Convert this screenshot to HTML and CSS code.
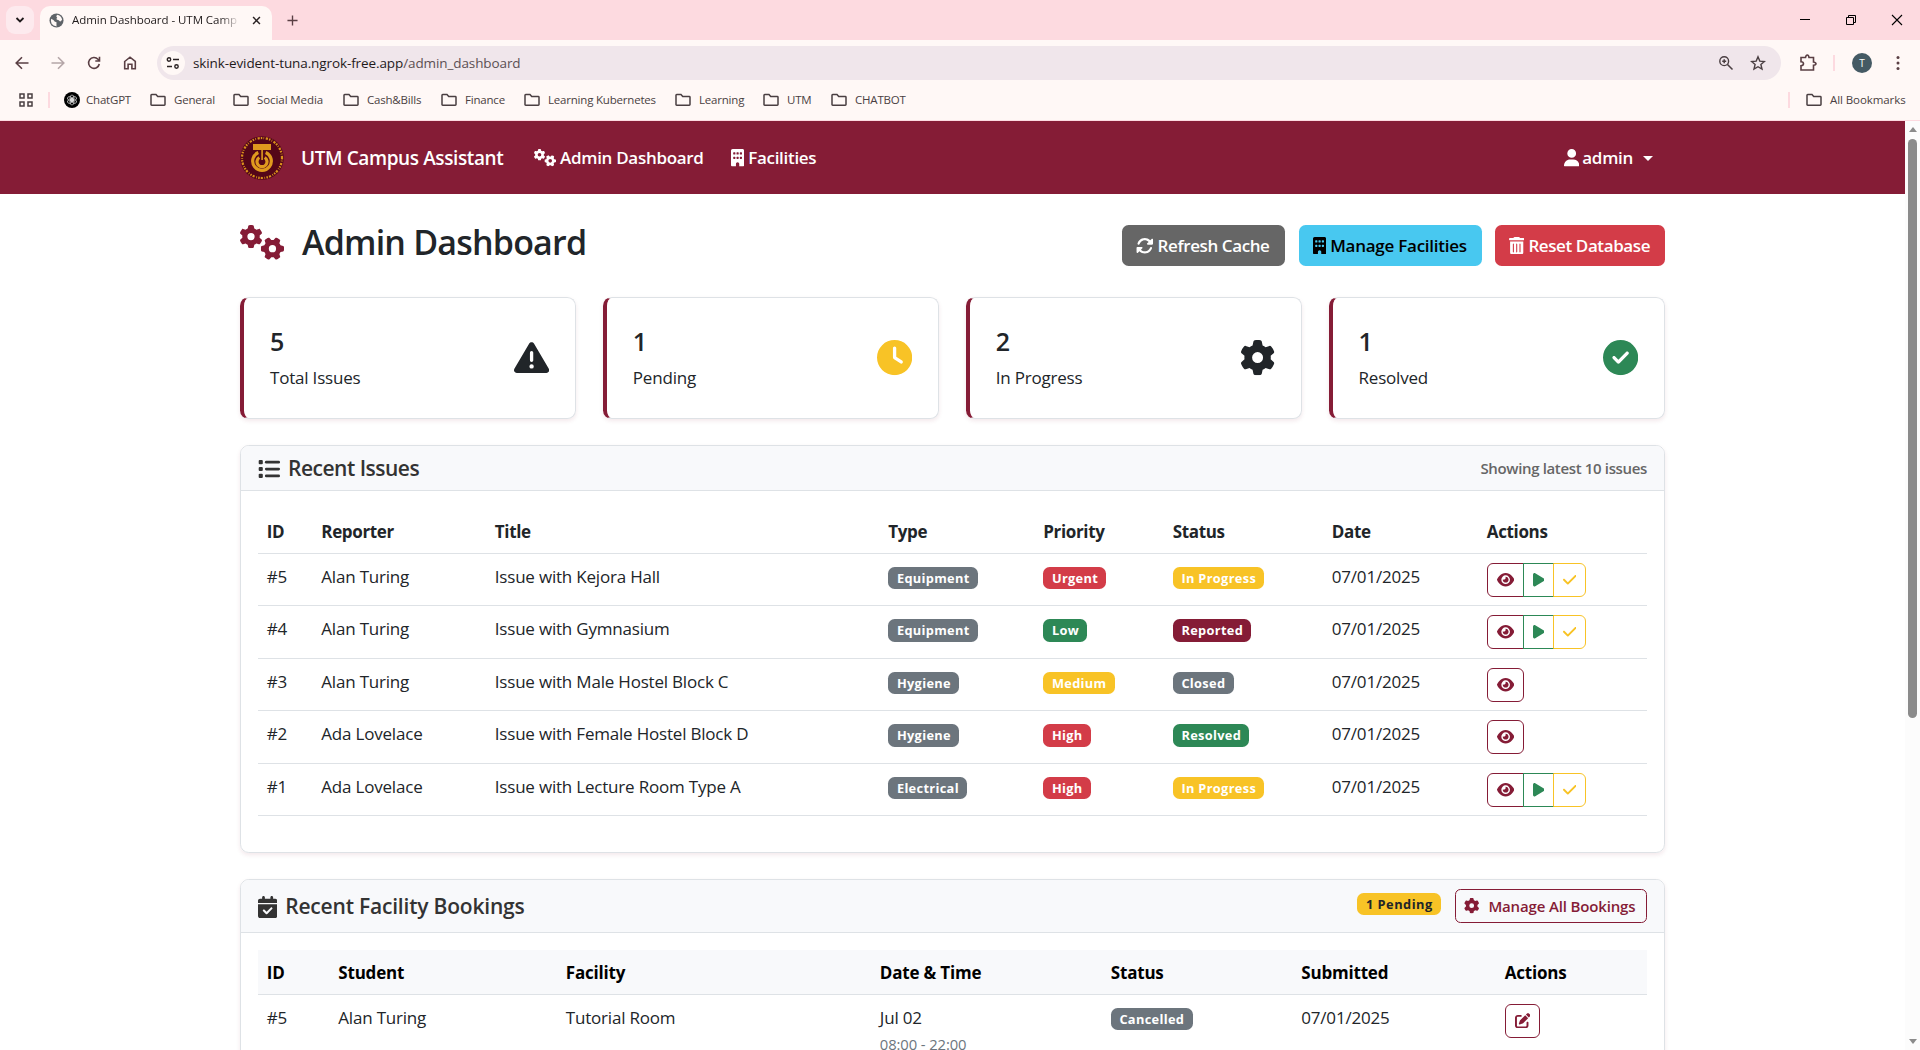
FILE: index.html
```html
<!DOCTYPE html>
<html lang="en">
<head>
<meta charset="utf-8">
<title>Admin Dashboard - UTM Campus Assistant</title>
<link rel="stylesheet" href="styles.css">
</head>
<body>
<svg class="sprite" aria-hidden="true">
  <symbol id="gear" viewBox="0 0 512 512"><path d="M495.9 166.6c3.2 8.7 .5 18.4-6.4 24.6l-43.3 39.4c1.1 8.3 1.7 16.8 1.7 25.4s-.6 17.1-1.7 25.4l43.3 39.4c6.9 6.2 9.6 15.9 6.4 24.6c-4.4 11.9-9.7 23.3-15.8 34.3l-4.7 8.1c-6.6 11-14 21.4-22.1 31.2c-5.9 7.2-15.7 9.6-24.5 6.8l-55.7-17.7c-13.4 10.3-28.2 18.9-44 25.4l-12.5 57.1c-2 9.1-9 16.3-18.2 17.8c-13.8 2.3-28 3.5-42.5 3.5s-28.7-1.2-42.5-3.5c-9.2-1.5-16.2-8.7-18.2-17.8l-12.5-57.1c-15.8-6.5-30.6-15.1-44-25.4L83.1 425.9c-8.8 2.8-18.6 .3-24.5-6.8c-8.1-9.8-15.5-20.2-22.1-31.2l-4.7-8.1c-6.1-11-11.4-22.4-15.8-34.3c-3.2-8.7-.5-18.4 6.4-24.6l43.3-39.4C64.6 273.1 64 264.6 64 256s.6-17.1 1.7-25.4L22.4 191.2c-6.9-6.2-9.6-15.9-6.4-24.6c4.4-11.9 9.7-23.3 15.8-34.3l4.7-8.1c6.6-11 14-21.4 22.1-31.2c5.9-7.2 15.7-9.6 24.5-6.8l55.7 17.7c13.4-10.3 28.2-18.9 44-25.4l12.5-57.1c2-9.1 9-16.3 18.2-17.8C227.3 1.2 241.5 0 256 0s28.7 1.2 42.5 3.5c9.2 1.5 16.2 8.7 18.2 17.8l12.5 57.1c15.8 6.5 30.6 15.1 44 25.4l55.7-17.7c8.8-2.8 18.6-.3 24.5 6.8c8.1 9.8 15.5 20.2 22.1 31.2l4.7 8.1c6.1 11 11.4 22.4 15.8 34.3zM256 336a80 80 0 1 0 0-160 80 80 0 1 0 0 160z"/></symbol>
  <symbol id="gears" viewBox="0 0 640 512"><use href="#gear" width="338" height="338" x="-9" y="0"/><g transform="rotate(90 472 344)"><use href="#gear" width="338" height="338" x="303" y="175"/></g></symbol>
  <symbol id="building" viewBox="0 0 384 512"><path d="M48 0C21.5 0 0 21.5 0 48V464c0 26.5 21.5 48 48 48h96V432c0-26.500 21.500-48 48-48s48 21.500 48 48v80h96c26.500 0 48-21.500 48-48V48c0-26.500-21.500-48-48-48H48zM64 240c0-8.800 7.200-16 16-16h32c8.800 0 16 7.200 16 16v32c0 8.800-7.200 16-16 16H80c-8.800 0-16-7.200-16-16V240zm112-16h32c8.800 0 16 7.200 16 16v32c0 8.800-7.200 16-16 16H176c-8.800 0-16-7.200-16-16V240c0-8.800 7.200-16 16-16zm80 16c0-8.800 7.200-16 16-16h32c8.800 0 16 7.200 16 16v32c0 8.800-7.200 16-16 16H272c-8.800 0-16-7.200-16-16V240zM80 96h32c8.800 0 16 7.200 16 16v32c0 8.800-7.200 16-16 16H80c-8.800 0-16-7.200-16-16V112c0-8.800 7.200-16 16-16zm80 16c0-8.800 7.200-16 16-16h32c8.800 0 16 7.200 16 16v32c0 8.800-7.200 16-16 16H176c-8.800 0-16-7.200-16-16V112zM272 96h32c8.800 0 16 7.200 16 16v32c0 8.800-7.200 16-16 16H272c-8.800 0-16-7.200-16-16V112c0-8.800 7.200-16 16-16z"/></symbol>
  <symbol id="user" viewBox="0 0 448 512"><path d="M224 256A128 128 0 1 0 224 0a128 128 0 1 0 0 256zm-45.700 48C79.800 304 0 383.800 0 482.300C0 498.700 13.300 512 29.700 512H418.300c16.400 0 29.700-13.300 29.700-29.700C448 383.800 368.200 304 269.700 304H178.300z"/></symbol>
  <symbol id="rotate" viewBox="0 0 512 512"><path d="M142.900 142.900c62.200-62.200 162.700-62.500 225.300-1L327 183c-6.900 6.900-8.900 17.200-5.200 26.200s12.500 14.800 22.200 14.800H472c13.300 0 24-10.700 24-24V72c0-9.700-5.800-18.500-14.800-22.200s-19.300-1.700-26.200 5.200L413.400 96.600c-87.600-86.500-228.700-86.200-315.800 1C73.200 122 55.600 150.700 44.800 181.400c-5.900 16.700 2.900 34.900 19.500 40.800s34.900-2.900 40.800-19.500c7.700-21.800 20.200-42.300 37.800-59.800zM16 312V440c0 9.700 5.800 18.500 14.800 22.200s19.300 1.700 26.200-5.200l41.600-41.600c87.600 86.500 228.700 86.200 315.800-1c24.400-24.400 42.100-53.100 52.900-83.700c5.900-16.700-2.900-34.900-19.500-40.800s-34.900 2.900-40.800 19.500c-7.700 21.800-20.200 42.300-37.800 59.800c-62.200 62.200-162.700 62.500-225.300 1L185 329c6.900-6.900 8.900-17.200 5.200-26.200s-12.500-14.800-22.200-14.800H40c-13.300 0-24 10.700-24 24z"/></symbol>
  <symbol id="trash" viewBox="0 0 448 512"><path d="M135.200 17.700C140.600 6.800 151.700 0 163.800 0H284.200c12.100 0 23.200 6.800 28.600 17.700L320 32h96c17.700 0 32 14.300 32 32s-14.300 32-32 32H32C14.300 96 0 81.700 0 64S14.300 32 32 32h96l7.200-14.300zM32 128H416V448c0 35.300-28.700 64-64 64H96c-35.300 0-64-28.700-64-64V128zm96 64c-8.800 0-16 7.200-16 16V432c0 8.800 7.200 16 16 16s16-7.200 16-16V208c0-8.800-7.200-16-16-16zm96 0c-8.800 0-16 7.200-16 16V432c0 8.800 7.200 16 16 16s16-7.200 16-16V208c0-8.800-7.200-16-16-16zm96 0c-8.800 0-16 7.200-16 16V432c0 8.800 7.200 16 16 16s16-7.200 16-16V208c0-8.800-7.200-16-16-16z"/></symbol>
  <symbol id="warning" viewBox="0 0 512 512"><path d="M256 32c14.200 0 27.300 7.500 34.500 19.800l216 368c7.300 12.400 7.300 27.700 .2 40.100S486.300 480 472 480H40c-14.300 0-27.600-7.700-34.700-20.100s-7-27.800 .2-40.100l216-368C228.700 39.500 241.800 32 256 32zm0 128c-13.300 0-24 10.700-24 24V296c0 13.300 10.700 24 24 24s24-10.700 24-24V184c0-13.300-10.700-24-24-24zm32 224a32 32 0 1 0-64 0 32 32 0 1 0 64 0z"/></symbol>
  <symbol id="clock" viewBox="0 0 512 512"><path d="M256 0a256 256 0 1 1 0 512A256 256 0 1 1 256 0zM232 120V256c0 8 4 15.500 10.700 20l96 64c11 7.400 25.900 4.400 33.300-6.700s4.400-25.900-6.700-33.300L280 243.200V120c0-13.300-10.700-24-24-24s-24 10.700-24 24z"/></symbol>
  <symbol id="circle-check" viewBox="0 0 512 512"><path d="M256 512A256 256 0 1 0 256 0a256 256 0 1 0 0 512zM369 209L241 337c-9.400 9.400-24.600 9.400-33.900 0l-64-64c-9.400-9.400-9.400-24.600 0-33.900s24.600-9.400 33.900 0l47 47L335 175c9.400-9.400 24.600-9.400 33.900 0s9.400 24.600 0 33.900z"/></symbol>
  <symbol id="list" viewBox="0 0 512 512"><g id="list-row"><rect x="16" y="48" width="96" height="96" rx="24"/><rect x="160" y="64" width="352" height="64" rx="32"/></g><use href="#list-row" y="160"/><use href="#list-row" y="320"/></symbol>
  <symbol id="calendar" viewBox="0 0 448 512"><path d="M128 0c17.700 0 32 14.300 32 32V64H288V32c0-17.700 14.300-32 32-32s32 14.300 32 32V64h48c26.500 0 48 21.500 48 48v48H0V112C0 85.500 21.500 64 48 64H96V32c0-17.700 14.300-32 32-32zM0 192H448V464c0 26.500-21.500 48-48 48H48c-26.500 0-48-21.500-48-48V192zM329 305c9.400-9.400 9.400-24.600 0-33.900s-24.600-9.400-33.900 0l-95 95-47-47c-9.400-9.400-24.600-9.400-33.900 0s-9.400 24.600 0 33.900l64 64c9.400 9.400 24.600 9.400 33.900 0L329 305z"/></symbol>
  <symbol id="eye" viewBox="0 0 576 512"><path d="M288 32c-80.800 0-145.500 36.800-192.600 80.600C48.600 156 17.300 208 2.500 243.700c-3.300 7.900-3.300 16.700 0 24.600C17.300 304 48.600 356 95.400 399.400C142.500 443.200 207.200 480 288 480s145.500-36.800 192.600-80.600c46.800-43.500 78.100-95.400 93-131.100c3.300-7.900 3.300-16.700 0-24.600c-14.900-35.700-46.200-87.700-93-131.100C433.500 68.800 368.800 32 288 32zM144 256a144 144 0 1 1 288 0 144 144 0 1 1 -288 0zm144-64c0 35.300-28.700 64-64 64c-7.100 0-13.900-1.200-20.300-3.300c-5.500-1.800-11.900 1.600-11.700 7.400c.3 6.900 1.300 13.800 3.200 20.700c13.700 51.200 66.400 81.600 117.600 67.900s81.600-66.400 67.900-117.600c-11.100-41.500-47.800-69.400-88.600-71.100c-5.800-.2-9.200 6.100-7.400 11.700c2.100 6.400 3.300 13.200 3.300 20.300z"/></symbol>
  <symbol id="play" viewBox="0 0 384 512"><path d="M73 39c-14.800-9.100-33.400-9.400-48.500-.9S0 62.600 0 80V432c0 17.400 9.400 33.400 24.500 41.900s33.700 8.100 48.500-.9L361 297c14.300-8.700 23-24.200 23-41s-8.700-32.200-23-41L73 39z"/></symbol>
  <symbol id="check" viewBox="0 0 448 512"><path d="M438.600 105.400c12.500 12.500 12.500 32.800 0 45.300l-256 256c-12.500 12.500-32.800 12.500-45.300 0l-128-128c-12.500-12.500-12.500-32.800 0-45.300s32.800-12.500 45.300 0L160 338.700 393.400 105.400c12.500-12.500 32.800-12.500 45.300 0z"/></symbol>
  <symbol id="edit" viewBox="0 0 512 512"><path d="M471.600 21.700c-21.900-21.900-57.300-21.900-79.200 0L362.300 51.700l97.900 97.900 30.100-30.100c21.900-21.900 21.900-57.300 0-79.200L471.600 21.700zm-299.200 220c-6.100 6.100-10.800 13.600-13.500 21.900l-29.600 88.800c-2.900 8.600-.6 18.100 5.800 24.600s15.900 8.700 24.600 5.800l88.800-29.600c8.200-2.700 15.700-7.400 21.900-13.500L437.700 172.300 339.700 74.300 172.400 241.700zM96 64C43 64 0 107 0 160V416c0 53 43 96 96 96H352c53 0 96-43 96-96V320c0-17.700-14.300-32-32-32s-32 14.300-32 32v96c0 17.700-14.300 32-32 32H96c-17.700 0-32-14.300-32-32V160c0-17.700 14.300-32 32-32h96c17.700 0 32-14.300 32-32s-14.300-32-32-32H96z"/></symbol>
  <symbol id="folder" viewBox="0 0 16 14"><path d="M1 11.500V2.200Q1 1.500 1.700 1.500H6L7.700 3.500H14.300Q15 3.500 15 4.200V11.600Q15 12.300 14.300 12.300H1.700Q1 12.300 1 11.500Z" fill="none" stroke="currentColor" stroke-width="1.500"/></symbol>
</svg>

<header class="browser">
  <div class="tabstrip">
    <div class="tab-search"><svg width="10" height="8" viewBox="0 0 10 8"><path d="M1.500 2l3.500 3.500L8.500 2" fill="none" stroke="#1f1a1b" stroke-width="1.800"/></svg></div>
    <div class="tab">
      <svg class="favicon" viewBox="0 0 16 16"><circle cx="8" cy="8" r="7.500" fill="#5f6368"/><path d="M2.300 6.200Q5 7 6.500 9.500 8.500 9 8 12 7.500 13.500 8.500 14 5 14.500 2.800 11.500 1.500 9 2.300 6.200ZM8.500 1.800Q13 2.600 14 7 13 9.500 11.500 8.800 10.500 7 8.500 7.200 7 6 8.800 5.200 7 4 8.500 1.800Z" fill="#fff8f6"/></svg>
      <span class="tab-title">Admin Dashboard - UTM Camp</span>
      <svg class="tab-close" viewBox="0 0 10 10"><path d="M1.200 1.200l7.600 7.600M8.800 1.200L1.200 8.800" stroke="#2a2223" stroke-width="1.700"/></svg>
    </div>
    <svg class="tab-new" viewBox="0 0 12 12"><path d="M6 .5v11M.5 6h11" stroke="#5a3f44" stroke-width="1.500"/></svg>
    <div class="window-controls">
      <svg width="12" height="12" viewBox="0 0 12 12"><path d="M1 5.500h10" stroke="#000"/></svg>
      <svg width="12" height="12" viewBox="0 0 12 12"><path d="M1.500 3.500h7v7h-7zM3.500 3.500v-2h7v7h-2" fill="none" stroke="#000"/></svg>
      <svg width="12" height="12" viewBox="0 0 12 12"><path d="M1 1l10 10M11 1L1 11" stroke="#000" stroke-width="1.100"/></svg>
    </div>
  </div>
  <div class="toolbar">
    <div class="nav-icons">
      <svg viewBox="0 0 16 16"><path d="M14.500 8H2.500M8 2.200L2.200 8 8 13.800" fill="none" stroke="#5a3f44" stroke-width="1.600"/></svg>
      <svg viewBox="0 0 16 16"><path d="M1.500 8h12M8 2.200L13.800 8 8 13.800" fill="none" stroke="#b5a6a8" stroke-width="1.600"/></svg>
      <svg viewBox="0 0 16 16"><path d="M13.300 9A5.400 5.400 0 1 1 12 4.300L13.300 5.600M13.500 1.800V6H9.300" fill="none" stroke="#5a3f44" stroke-width="1.600"/></svg>
      <svg viewBox="0 0 16 16"><path d="M2.700 6.500L8 2.200l5.300 4.300v7.200H9.900V9.200H6.100v4.500H2.700Z" fill="none" stroke="#5a3f44" stroke-width="1.600"/></svg>
    </div>
    <div class="omnibox">
      <div class="site-info"><svg width="14" height="12" viewBox="0 0 14 12"><path d="M7 2.500h6M1 9.500h5" stroke="#2a2223" stroke-width="1.500"/><circle cx="3" cy="2.500" r="1.700" fill="none" stroke="#2a2223" stroke-width="1.400"/><circle cx="10.500" cy="9.500" r="1.700" fill="none" stroke="#2a2223" stroke-width="1.400"/></svg></div>
      <span class="url">skink-evident-tuna.ngrok-free.app<span class="path">/admin_dashboard</span></span>
      <svg class="omni-icon" viewBox="0 0 16 16"><circle cx="6.200" cy="6.200" r="4.400" fill="none" stroke="#4a3f42" stroke-width="1.400"/><path d="M9.500 9.500l5 5M6.200 4.200v4M4.200 6.200h4" stroke="#4a3f42" stroke-width="1.500"/></svg>
      <svg class="omni-icon" viewBox="0 0 16 16"><path d="M8 1.800l1.800 4.300 4.600.4-3.500 3 1.100 4.600L8 11.700l-4 2.400 1.100-4.600-3.500-3 4.600-.4Z" fill="none" stroke="#4a3f42" stroke-width="1.400"/></svg>
    </div>
    <div class="toolbar-right">
      <svg class="ext" viewBox="0 0 18 18"><path d="M2 3.500h4.500Q7 1 8.300 1T10 3.500h4.500V8Q17 8.500 17 9.700T14.500 11.300V16H2V11.800Q4.500 11.500 4.500 9.700T2 7.700Z" fill="none" stroke="#5a3f44" stroke-width="1.600"/></svg>
      <i class="sep"></i>
      <span class="avatar">T</span>
      <svg class="dots" viewBox="0 0 4 16"><circle cx="2" cy="2.500" r="1.500"/><circle cx="2" cy="8" r="1.500"/><circle cx="2" cy="13.500" r="1.500"/></svg>
    </div>
  </div>
  <div class="bookmarks">
    <svg class="apps" viewBox="0 0 14 14"><path d="M1 1h4v4H1zM9 1h4v4H9zM1 9h4v4H1zM9 9h4v4H9z" fill="none" stroke="#4a3f42" stroke-width="1.500"/></svg>
    <i class="sep"></i>
    <span class="bm"><svg class="gpt" viewBox="0 0 16 16"><circle cx="8" cy="8" r="8"/><g fill="none" stroke="#fff" stroke-width=".6"><ellipse cx="8" cy="6" rx="2" ry="3"/><ellipse cx="8" cy="6" rx="2" ry="3" transform="rotate(60 8 8)"/><ellipse cx="8" cy="6" rx="2" ry="3" transform="rotate(120 8 8)"/><ellipse cx="8" cy="6" rx="2" ry="3" transform="rotate(180 8 8)"/><ellipse cx="8" cy="6" rx="2" ry="3" transform="rotate(240 8 8)"/><ellipse cx="8" cy="6" rx="2" ry="3" transform="rotate(300 8 8)"/></g></svg>ChatGPT</span>
    <span class="bm"><svg><use href="#folder"/></svg>General</span>
    <span class="bm wide"><svg><use href="#folder"/></svg>Social Media</span>
    <span class="bm"><svg><use href="#folder"/></svg>Cash&amp;Bills</span>
    <span class="bm"><svg><use href="#folder"/></svg>Finance</span>
    <span class="bm"><svg><use href="#folder"/></svg>Learning Kubernetes</span>
    <span class="bm"><svg><use href="#folder"/></svg>Learning</span>
    <span class="bm"><svg><use href="#folder"/></svg>UTM</span>
    <span class="bm"><svg><use href="#folder"/></svg>CHATBOT</span>
    <i class="sep"></i>
    <span class="bm wide"><svg><use href="#folder"/></svg>All Bookmarks</span>
  </div>
</header>

<div class="viewport">
  <div class="page">
    <nav class="navbar">
      <div class="container navbar-inner">
        <svg class="logo" viewBox="0 0 44 44"><circle cx="22" cy="22" r="21.800" fill="#540618"/><circle cx="22" cy="22" r="20" fill="none" stroke="#d9901c" stroke-width="2.200" stroke-dasharray="1.500 1.300 .7 1.600 2.200 1.100"/><g fill="#e09a1e"><path d="M13 8h18v6H13z"/><path d="M21.300 14h1.600v10h-1.600z"/></g><path d="M18.300 16.500A9.300 9.300 0 1 0 25.700 16.500M19.300 21.500A5 5 0 1 0 24.700 21.500" fill="none" stroke="#e09a1e" stroke-width="3.200"/></svg>
        <span class="brand">UTM Campus Assistant</span>
        <a class="nav-link nav-dash"><svg class="i-gears"><use href="#gears"/></svg>Admin Dashboard</a>
        <a class="nav-link nav-fac"><svg class="i-building"><use href="#building"/></svg>Facilities</a>
        <a class="nav-link nav-user"><svg class="i-user"><use href="#user"/></svg>admin<i class="caret"></i></a>
      </div>
    </nav>
    <main class="container">
      <div class="page-head">
        <svg class="title-icon"><use href="#gears"/></svg>
        <h1>Admin Dashboard</h1>
        <div class="head-actions">
          <button class="btn btn-gray"><svg class="i-512"><use href="#rotate"/></svg>Refresh Cache</button>
          <button class="btn btn-info"><svg class="i-building"><use href="#building"/></svg>Manage Facilities</button>
          <button class="btn btn-danger"><svg class="i-user"><use href="#trash"/></svg>Reset Database</button>
        </div>
      </div>

      <section class="stats">
        <div class="stat"><div><h4>5</h4><p>Total Issues</p></div><svg><use href="#warning"/></svg></div>
        <div class="stat"><div><h4>1</h4><p>Pending</p></div><svg class="c-warning"><use href="#clock"/></svg></div>
        <div class="stat"><div><h4>2</h4><p>In Progress</p></div><svg><use href="#gear"/></svg></div>
        <div class="stat"><div><h4>1</h4><p>Resolved</p></div><svg class="c-success"><use href="#circle-check"/></svg></div>
      </section>

      <section class="card issues">
        <div class="card-header"><h5><svg class="i-list"><use href="#list"/></svg>Recent Issues</h5><small>Showing latest 10 issues</small></div>
        <table>
          <colgroup><col class="a1"><col class="a2"><col class="a3"><col class="a4"><col class="a5"><col class="a6"><col class="a7"><col></colgroup>
          <thead><tr><th>ID</th><th>Reporter</th><th>Title</th><th>Type</th><th>Priority</th><th>Status</th><th>Date</th><th>Actions</th></tr></thead>
          <tbody>
            <tr><td>#5</td><td>Alan Turing</td><td>Issue with Kejora Hall</td><td><span class="badge">Equipment</span></td><td><span class="badge danger">Urgent</span></td><td><span class="badge warning">In Progress</span></td><td>07/01/2025</td><td><div class="group"><b class="view"><svg><use href="#eye"/></svg></b><b class="start"><svg><use href="#play"/></svg></b><b class="done"><svg><use href="#check"/></svg></b></div></td></tr>
            <tr><td>#4</td><td>Alan Turing</td><td>Issue with Gymnasium</td><td><span class="badge">Equipment</span></td><td><span class="badge success">Low</span></td><td><span class="badge primary">Reported</span></td><td>07/01/2025</td><td><div class="group"><b class="view"><svg><use href="#eye"/></svg></b><b class="start"><svg><use href="#play"/></svg></b><b class="done"><svg><use href="#check"/></svg></b></div></td></tr>
            <tr><td>#3</td><td>Alan Turing</td><td>Issue with Male Hostel Block C</td><td><span class="badge">Hygiene</span></td><td><span class="badge warning">Medium</span></td><td><span class="badge">Closed</span></td><td>07/01/2025</td><td><div class="group"><b class="view"><svg><use href="#eye"/></svg></b></div></td></tr>
            <tr><td>#2</td><td>Ada Lovelace</td><td>Issue with Female Hostel Block D</td><td><span class="badge">Hygiene</span></td><td><span class="badge danger">High</span></td><td><span class="badge success">Resolved</span></td><td>07/01/2025</td><td><div class="group"><b class="view"><svg><use href="#eye"/></svg></b></div></td></tr>
            <tr><td>#1</td><td>Ada Lovelace</td><td>Issue with Lecture Room Type A</td><td><span class="badge">Electrical</span></td><td><span class="badge danger">High</span></td><td><span class="badge warning">In Progress</span></td><td>07/01/2025</td><td><div class="group"><b class="view"><svg><use href="#eye"/></svg></b><b class="start"><svg><use href="#play"/></svg></b><b class="done"><svg><use href="#check"/></svg></b></div></td></tr>
          </tbody>
        </table>
      </section>

      <section class="card bookings">
        <div class="card-header"><h5><svg class="i-cal"><use href="#calendar"/></svg>Recent Facility Bookings</h5>
          <div class="header-actions"><span class="badge pending">1 Pending</span><button class="btn-outline"><svg><use href="#gear"/></svg>Manage All Bookings</button></div></div>
        <table>
          <colgroup><col class="b1"><col class="b2"><col class="b3"><col class="b4"><col class="b5"><col class="b6"><col></colgroup>
          <thead><tr><th>ID</th><th>Student</th><th>Facility</th><th>Date &amp; Time</th><th>Status</th><th>Submitted</th><th>Actions</th></tr></thead>
          <tbody>
            <tr><td>#5</td><td>Alan Turing</td><td>Tutorial Room</td><td>Jul 02<small>08:00 - 22:00</small></td><td><span class="badge">Cancelled</span></td><td>07/01/2025</td><td><div class="group"><b class="view edit"><svg><use href="#edit"/></svg></b></div></td></tr>
          </tbody>
        </table>
      </section>
    </main>
  </div>
  <aside class="scrollbar"><i class="up"></i><i class="thumb"></i><i class="down"></i></aside>
</div>
</body>
</html>
```
FILE: styles.css
```css
* { box-sizing: border-box; }
html, body { height: 100%; }
body {
  margin: 0;
  display: flex;
  flex-direction: column;
  overflow: hidden;
  font-family: "Open Sans", "Noto Sans", sans-serif;
  font-size: 17px;
  line-height: 26.4px;
  color: #212529;
  background: #fff;
}
svg { display: block; flex: none; fill: currentColor; }
.sprite { position: absolute; width: 0; height: 0; }
h1, h4, h5, p { margin: 0; font-weight: 600; }

/* Browser chrome */
.browser { flex: none; height: 121px; background: #fff8f6; border-bottom: 1px solid #fddae0; color: #4a3f42; }
.tabstrip { display: flex; align-items: center; height: 40px; padding-left: 6px; background: #fddae0; }
.tab-search { display: flex; align-items: center; justify-content: center; width: 28px; height: 28px; border-radius: 9px; background: #fdeaee; }
.tab { align-self: flex-end; display: flex; align-items: center; width: 232px; height: 34px; margin-left: 6px; padding: 0 11px 6px 9px; border-radius: 10px 10px 0 0; background: #fff8f6; }
.favicon { width: 15px; height: 15px; }
.tab-title { width: 168px; margin-left: 8px; overflow: hidden; white-space: nowrap; font-size: 11.5px; letter-spacing: -0.05px; color: #1f1a1b; -webkit-mask-image: linear-gradient(90deg, #000 88%, transparent); mask-image: linear-gradient(90deg, #000 88%, transparent); }
.tab-close { width: 9px; height: 9px; margin-left: 12px; }
.tab-new { width: 11px; height: 11px; margin: 0 0 0 15px; }
.window-controls { display: flex; gap: 34px; margin: 0 17px 0 auto; }
.toolbar { display: flex; align-items: center; height: 46px; padding: 0 20px 0 14px; }
.nav-icons { display: flex; gap: 20px; width: 143px; }
.nav-icons svg { width: 16px; height: 16px; }
.omnibox { display: flex; align-items: center; width: 1625px; height: 34px; padding: 0 15px 0 4px; border-radius: 17px; background: #f0e6eb; }
.site-info { display: flex; align-items: center; justify-content: center; width: 24px; height: 24px; border-radius: 50%; background: #fff8f6; }
.url { flex: 1; margin-left: 8px; font-size: 13.5px; letter-spacing: -0.1px; color: #1f1a1b; }
.path { color: #5c5053; }
.omni-icon { width: 16px; height: 16px; margin-left: 16px; }
.toolbar-right { display: flex; align-items: center; flex: 1; color: #5a3f44; }
.ext { width: 18px; height: 18px; margin-left: 18px; }
.sep { width: 2px; height: 16px; background: #fddae0; }
.ext + .sep { margin-left: 16px; }
.avatar { width: 20px; height: 20px; margin-left: 17px; border-radius: 50%; background: #455a64; color: #fff; font-size: 10px; line-height: 20px; text-align: center; }
.dots { width: 4px; height: 16px; margin-left: 24px; }
.bookmarks { display: grid; align-items: center; grid-template-columns: 29px 16px 86px 83px 110px 98px 83px 151px 88px 68px 957px 18px 110px; height: 28px; padding-left: 19px; }
.apps { width: 14px; height: 14px; }
.bm { display: flex; align-items: center; gap: 8px; white-space: nowrap; font-size: 11.5px; letter-spacing: -0.2px; }
.bm.wide { letter-spacing: -0.08px; }
.bm svg { width: 16px; height: 14px; }
.bm .gpt { width: 16px; height: 16px; margin-right: -2px; fill: #000; }

/* Page frame */
.viewport { flex: 1; display: flex; min-height: 0; }
.page { width: 1905px; overflow: hidden; }
.scrollbar { flex: 1; display: flex; flex-direction: column; align-items: center; background: #fcfcfc; }
.up, .down { border: 4px solid transparent; border-top: 0; border-bottom: 5px solid #8b8b8b; margin-top: 6px; }
.thumb { width: 9px; height: 579px; margin-top: 7px; border-radius: 5px; background: #8b8b8b; }
.down { border-top: 5px solid #8b8b8b; border-bottom: 0; margin: auto 0 6px; }
.container { width: 1425px; margin: 0 auto; }

/* Navbar */
.navbar { height: 73px; background: #851c36; color: #fff; }
.navbar-inner { display: flex; align-items: center; height: 73px; }
.logo { width: 44px; height: 44px; }
.brand { width: 233px; margin-left: 17px; padding-top: 2px; white-space: nowrap; font-size: 19px; font-weight: 600; letter-spacing: -0.4px; }
.nav-link { display: flex; align-items: center; gap: 4px; padding-top: 1px; white-space: nowrap; font-weight: 600; letter-spacing: -0.3px; }
.nav-dash { width: 197px; }
.nav-user { gap: 3px; margin-left: auto; margin-right: 12px; }
.i-gears { width: 22px; height: 17.600px; }
.i-building { width: 13.200px; height: 17.600px; }
.i-user { width: 15.400px; height: 17.600px; }
.i-512 { width: 17.600px; height: 17.600px; }
.caret { margin-left: 7px; border: 5px solid transparent; border-top-color: #fff; border-bottom: 0; }

/* Heading */
.page-head { display: flex; align-items: center; height: 103px; }
.title-icon { width: 44px; height: 35.200px; color: #851c36; margin-top: -6px; }
h1 { margin: -8px 0 0 18px; font-size: 34px; line-height: 42px; letter-spacing: -0.8px; }
.head-actions { display: flex; gap: 13px; margin-left: auto; }
.btn { display: flex; align-items: center; gap: 4px; height: 41px; padding: 0 14px; border: 0; border-radius: 6.600px; font: 600 17px "Open Sans", sans-serif; letter-spacing: -0.4px; white-space: nowrap; color: #fff; }
.btn-gray { width: 163px; background: #666; }
.btn-info { width: 183px; margin-left: 1px; letter-spacing: -0.25px; background: #48c8f0; color: #000; }
.btn-danger { width: 170px; background: #d33c48; }

/* Stats */
.stats { display: grid; grid-template-columns: repeat(4, 1fr); gap: 26.400px; }
.stat { display: flex; justify-content: space-between; align-items: center; height: 122px; padding: 0 26px; border: 1px solid #dee2e6; border-left: 4px solid #851c36; border-radius: 8.800px; box-shadow: 0 2px 4px rgba(133, 28, 54, .1); }
.stat h4 { font-size: 25px; line-height: 32px; margin: 1px 0 8px; }
.stat p { font-weight: 400; letter-spacing: -0.2px; }
.stat svg { width: 35.200px; height: 35.200px; }
.c-warning { color: #f8c326; }
.c-success { color: #2d8856; }

/* Cards and tables */
.card { margin-top: 26px; border: 1px solid #dee2e6; border-radius: 8.800px; box-shadow: 0 2px 4px rgba(133, 28, 54, .1); }
.issues { height: 408px; }
.bookings { height: 400px; }
.card-header { display: flex; justify-content: space-between; align-items: center; height: 45px; padding: 1px 17px 0; border-bottom: 1px solid #dee2e6; border-radius: 8px 8px 0 0; background: #f8f9fb; color: #333; }
.bookings .card-header { height: 53px; }
h5 { display: flex; align-items: center; gap: 8px; font-size: 21px; letter-spacing: -0.5px; }
.bookings h5 { letter-spacing: -0.2px; }
.i-list { width: 22px; height: 22px; }
.i-cal { width: 19.250px; height: 22px; }
.card-header small { font-size: 15px; font-weight: 600; color: #666; letter-spacing: -0.35px; }
table { width: 1389px; margin: 17.600px 17px 0; table-layout: fixed; border-collapse: separate; border-spacing: 0; }
.bookings table { margin-top: 16.600px; }
th, td { padding: 0 0 0 8.800px; text-align: left; vertical-align: top; border-bottom: 1px solid #dee2e6; white-space: nowrap; }
th { height: 45px; padding-top: 10px; font-weight: 700; letter-spacing: -0.35px; }
td { height: 52.500px; padding-top: 10px; letter-spacing: -0.2px; }
.a1 { width: 54.500px; } .a2 { width: 173.500px; } .a3 { width: 393.500px; } .a4 { width: 155px; } .a5 { width: 129.500px; } .a6 { width: 159px; } .a7 { width: 155px; }
.b1 { width: 71.500px; } .b2 { width: 227.500px; } .b3 { width: 314px; } .b4 { width: 231px; } .b5 { width: 190.500px; } .b6 { width: 203.500px; }
.bookings th { background: #f8f9fb; color: #000; letter-spacing: -0.2px; }
td small { display: block; font-size: 14.800px; line-height: 26px; letter-spacing: -0.1px; color: #6c757d; }
.badge { display: inline-block; height: 22.500px; margin-top: 3px; padding: 0 8.300px 0 8.600px; border-radius: 6.600px; background: #6c757d; color: #fff; font-size: 12.800px; font-weight: 700; line-height: 22.500px; letter-spacing: 0.33px; vertical-align: top; }
.danger { background: #d33c48; }
.warning { background: #f8c326; }
.success { background: #2d8856; }
.primary { background: #851c36; }
.pending { margin: -4px 0 0; background: #f8c326; color: #212529; letter-spacing: 0.5px; }
.group { display: flex; margin-top: -1px; }
.group b { display: flex; align-items: center; justify-content: center; height: 34px; border: 1px solid; }
.group b:first-child { border-radius: 6px 0 0 6px; }
.group b:last-child { border-radius: 0 6px 6px 0; }
.group b:only-child { border-radius: 6px; }
.group b + b { margin-left: -1px; }
.view { width: 37px; color: #851c36; }
.start { width: 31px; color: #2d8856; }
.done { width: 33px; color: #f8c326; }
.view svg { width: 17.300px; height: 15.400px; }
.start svg { width: 11.600px; height: 15.400px; }
.done svg { width: 13.500px; height: 15.400px; }
.view.edit { width: 35px; }
.edit svg { width: 15.400px; height: 15.400px; }
.header-actions { display: flex; align-items: center; gap: 14px; margin-top: -1px; }
.btn-outline { display: flex; align-items: center; gap: 9px; width: 192px; height: 34px; padding: 0 8px; border: 1px solid #851c36; border-radius: 5.500px; background: transparent; color: #851c36; font: 600 15px "Open Sans", sans-serif; letter-spacing: -0.15px; white-space: nowrap; }
.btn-outline svg { width: 15.400px; height: 15.400px; }
```
